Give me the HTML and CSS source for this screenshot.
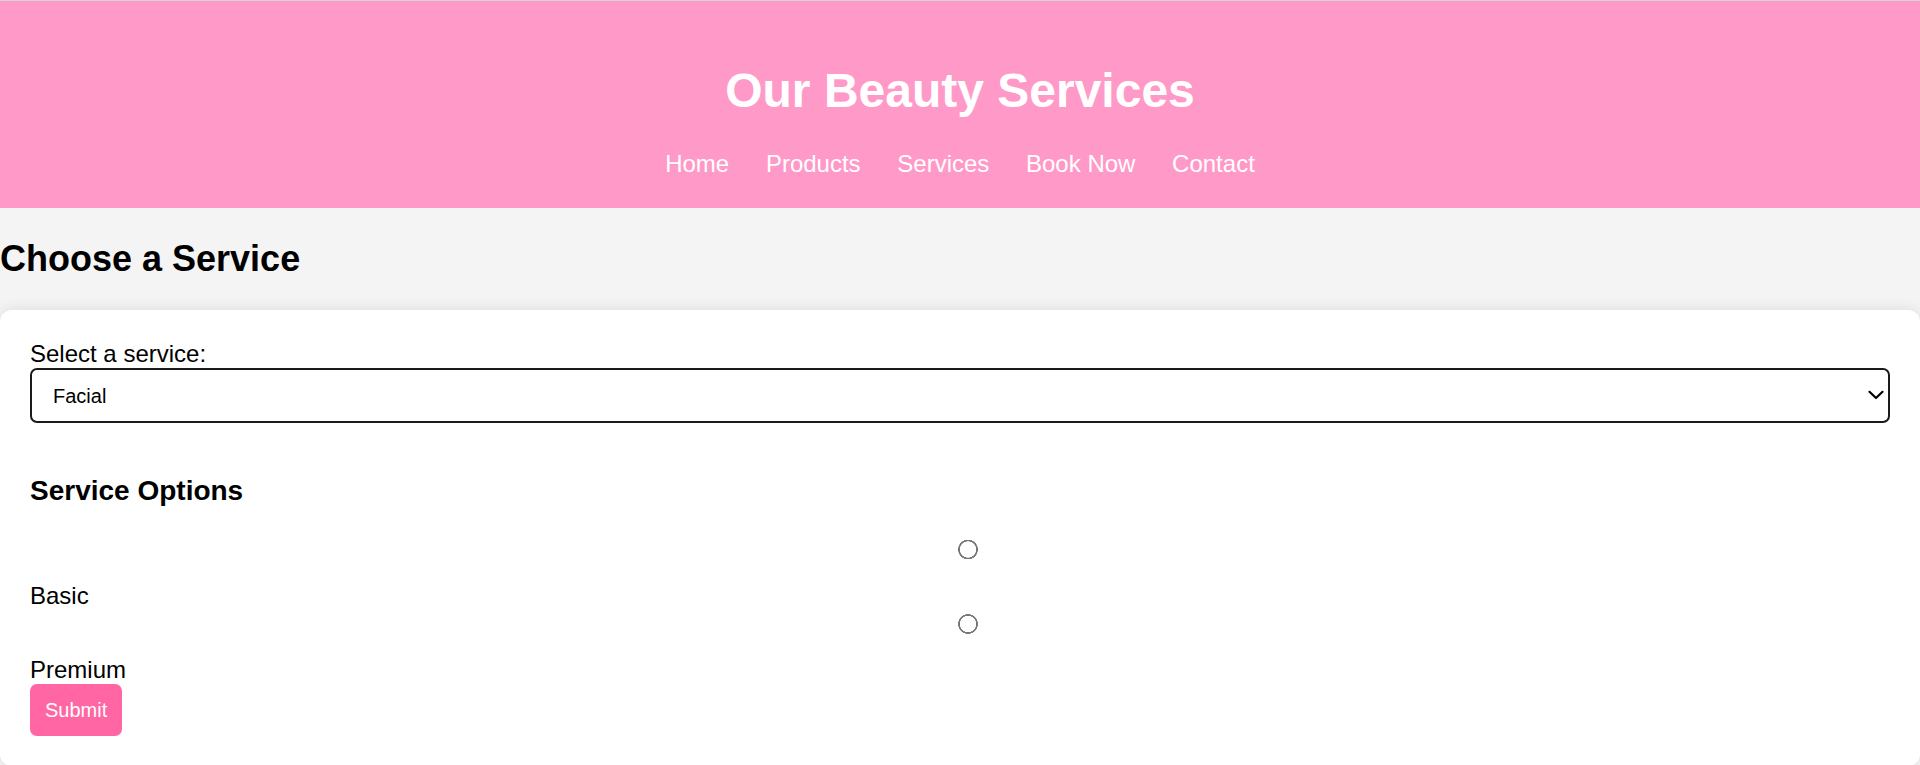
FILE: index.html
```html
<!DOCTYPE html>
<html lang="en">
<head>
<meta charset="utf-8">
<title>Our Beauty Services</title>
<link rel="stylesheet" href="styles.css">
</head>
<body>
<header class="site-header">
  <h1 class="site-title">Our Beauty Services</h1>
  <nav class="site-nav">
    <a href="#">Home</a>
    <a href="#">Products</a>
    <a href="#">Services</a>
    <a href="#">Book Now</a>
    <a href="#">Contact</a>
  </nav>
</header>
<main class="content">
  <h2 class="page-title">Choose a Service</h2>
  <form class="card">
    <label class="field-label" for="service">Select a service:</label>
    <div class="select-wrap">
      <select id="service" class="field-select">
        <option>Facial</option>
        <option>Massage</option>
        <option>Manicure</option>
      </select>
      <svg class="select-chevron" width="16" height="10" viewBox="0 0 16 10" aria-hidden="true"><path d="M1.5 1.8 L8 8 L14.5 1.8" fill="none" stroke="#000" stroke-width="2.2" stroke-linecap="round" stroke-linejoin="round"/></svg>
    </div>
    <h3 class="options-title">Service Options</h3>
    <div class="option-list">
      <input class="option-radio" type="radio" name="opt" id="basic">
      <label class="option-label" for="basic">Basic</label>
      <input class="option-radio" type="radio" name="opt" id="premium">
      <label class="option-label" for="premium">Premium</label>
    </div>
    <button type="button" class="submit-btn">Submit</button>
  </form>
</main>
</body>
</html>
```
FILE: styles.css
```css
html, body {
  margin: 0;
  padding: 0;
}
body {
  font-family: "Liberation Sans", Arial, sans-serif;
  font-size: 24px;
  background: #f4f4f4;
  color: #000;
  border-top: 1px solid #d4d4d4;
}
.site-header {
  background: #ff99c8;
  color: #fff;
  text-align: center;
  padding: 30px 0;
}
.site-title {
  font-size: 48px;
  font-weight: bold;
  margin: 32px 0;
}
.site-nav {
  display: flex;
  justify-content: center;
  gap: 36.7px;
}
.site-nav a {
  color: #fff;
  text-decoration: none;
}
.content {
  padding: 0;
}
.page-title {
  font-size: 36px;
  margin: 30px 0 30px;
}
.card {
  background: #fff;
  border-radius: 12px;
  box-shadow: 0 0 15px rgba(0, 0, 0, 0.1);
  padding: 30px;
  display: block;
}
.field-label {
  display: block;
}
.select-wrap {
  position: relative;
}
.field-select {
  display: block;
  width: 100%;
  height: 55px;
  box-sizing: border-box;
  margin: 0;
  padding: 0 21px;
  font-family: "Liberation Sans", Arial, sans-serif;
  font-size: 20px;
  color: #000;
  background: #fff;
  border: 2px solid #1a1a1a;
  border-radius: 7px;
  -webkit-appearance: none;
  appearance: none;
}
.select-chevron {
  position: absolute;
  right: 6px;
  top: 22px;
  pointer-events: none;
}
.options-title {
  font-size: 28px;
  margin: 52px 0 0;
}
.option-list {
  padding-top: 28px;
}
.option-radio {
  display: block;
  width: 100%;
  height: 19.5px;
  margin: 4.5px 4.5px 22.5px 7.5px;
  -webkit-appearance: none;
  appearance: none;
  border: none;
  padding: 0;
  background: radial-gradient(circle at center, transparent 7.9px, #767676 8.4px, #767676 9.6px, transparent 10.1px);
}
.option-label {
  display: block;
}
.submit-btn {
  display: block;
  font-family: "Liberation Sans", Arial, sans-serif;
  font-size: 20px;
  color: #fff;
  background: #ff66a3;
  border: none;
  border-radius: 7px;
  padding: 14.5px 15px;
  line-height: 23px;
  margin: 0;
}
```
